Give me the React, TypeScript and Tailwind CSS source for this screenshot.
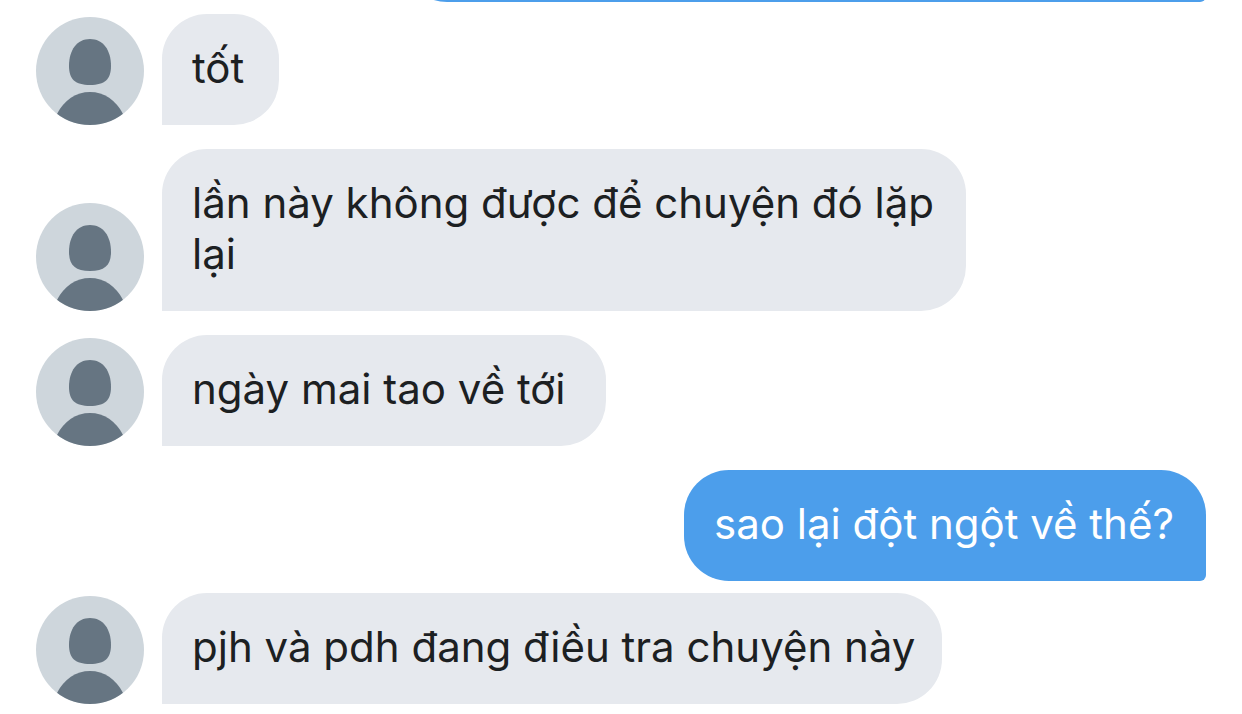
import clsx from "clsx";

interface Message {
  id: number;
  text: string;
  mine?: boolean;
  // width of the bubble, when it is not simply the width of its text
  size?: string;
  gap: string;
}

const messages: Message[] = [
  { id: 1, text: "tốt", gap: "mt-3", size: "min-w-[117px]" },
  {
    id: 2,
    text: "lần này không được để chuyện đó lặp lại",
    gap: "mt-6",
    size: "w-[804px]",
  },
  { id: 3, text: "ngày mai tao về tới", gap: "mt-6", size: "min-w-[444px]" },
  { id: 4, text: "sao lại đột ngột về thế?", mine: true, gap: "mt-6", size: "min-w-[522px]" },
  { id: 5, text: "pjh và pdh đang điều tra chuyện này", gap: "mt-3", size: "min-w-[780px]" },
];

function Avatar() {
  return (
    <svg
      viewBox="0 0 108 108"
      className="size-[108px] shrink-0 rounded-full bg-[#ced6dc]"
      aria-hidden="true"
    >
      <path
        d="M54 22C41 22 33 33 33 49C33 62 39 68 54 68C69 68 75 62 75 49C75 33 67 22 54 22Z"
        fill="#667582"
      />
      <path d="M21 97C28 83 40 75 54 75C68 75 80 83 87 97V108H21Z" fill="#667582" />
    </svg>
  );
}

function Bubble({ message }: { message: Message }) {
  return (
    <p
      className={clsx(
        "max-w-full rounded-t-[45px] pt-7 pr-6 pb-8 pl-[30px] text-[42px] leading-[51px]",
        message.size,
        message.mine
          ? "rounded-bl-[45px] rounded-br-md bg-[#4c9eeb] text-white"
          : "rounded-br-[45px] bg-[#e6e9ee] text-[#1c2022]"
      )}
    >
      {message.text}
    </p>
  );
}

export default function App() {
  return (
    <main className="bg-white px-9 pb-2.5 font-['Inter',sans-serif]">
      {/* End of the previous message, scrolled out at the top */}
      <div className="flex h-0.5 items-end justify-end overflow-hidden">
        <div className="h-[111px] w-[804px] shrink-0 rounded-[45px] rounded-br-md bg-[#4c9eeb]" />
      </div>

      {messages.map((message) => (
        <div
          key={message.id}
          className={clsx("flex items-end gap-[18px]", message.gap, message.mine && "justify-end")}
        >
          {!message.mine && <Avatar />}
          <Bubble message={message} />
        </div>
      ))}
    </main>
  );
}
